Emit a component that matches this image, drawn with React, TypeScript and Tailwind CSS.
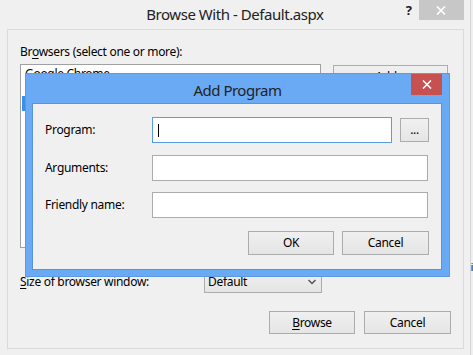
const btn =
  "flex items-center justify-center border border-[#acacac] bg-gradient-to-b from-[#f0f0f0] to-[#e5e5e5] text-[12px] leading-none text-black";

function U({ children }: { children: string }) {
  return <span className="underline underline-offset-2">{children}</span>;
}

export default function App() {
  return (
    <div className="relative flex h-[355px] w-[473px] overflow-hidden bg-[#f0f0f0] font-['Noto_Sans','DejaVu_Sans',sans-serif] tracking-[-0.3px] text-black">
      {/* Main window */}
      <div className="flex h-full w-[471px] flex-col border-r border-[#d4d4d4] bg-[#f0f0f0]">
        {/* Title bar */}
        <div className="grid h-[29px] grid-cols-[1fr_auto_1fr]">
          <div />
          <div className="pt-[4px] text-[15px] leading-[20px] tracking-[-0.45px] text-[#222]">Browse With - Default.aspx</div>
          <div className="flex items-start justify-end pr-[6px]">
            <span className="mr-[7px] mt-[2px] text-[13px] font-bold leading-[16px] text-[#222]">?</span>
            <div className="flex h-[20px] w-[45px] items-center justify-center bg-[#c7c7c7]">
              <svg width="10" height="9" viewBox="0 0 10 9">
                <path d="M1 0.5 L9 8.5 M9 0.5 L1 8.5" stroke="#fff" strokeWidth="1.6" />
              </svg>
            </div>
          </div>
        </div>
        {/* Panel */}
        <div className="ml-[7px] flex h-[320px] w-[457px] flex-col border border-[#dadada] bg-[#f0f0f0] pl-[12px] pr-[12px] pt-[14px]">
          <div className="h-[16px] text-[12px] leading-[16px]">
            Br<U>o</U>wsers (select one or more):
          </div>
          <div className="mt-[4px] flex items-start">
            <div className="flex h-[184px] w-[301px] flex-col border border-[#a0a0a0] bg-white p-[1px] text-[12px]">
              <div className="h-[15px] pl-[3px] leading-[15px]">Google Chrome</div>
              <div className="h-[15px]" />
              <div className="h-[15px] bg-[#3d8ee6]" />
            </div>
            <div className={`${btn} ml-[12px] mt-[1px] h-[23px] w-[115px]`}>Add...</div>
          </div>
          <div className="mt-[22px] flex items-center">
            <div className="w-[184px] text-[12px] leading-[16px]">
              <U>S</U>ize of browser window:
            </div>
            <div className="flex h-[23px] w-[118px] items-center justify-between border border-[#acacac] bg-gradient-to-b from-[#f0f0f0] to-[#e5e5e5] pl-[3px] pr-[5px] text-[12px]">
              <span>Default</span>
              <svg width="8" height="6" viewBox="0 0 8 6">
                <path d="M0.5 1 L4 4.5 L7.5 1" stroke="#555" strokeWidth="1.5" fill="none" />
              </svg>
            </div>
          </div>
          <div className="mt-[18px] flex justify-end">
            <div className={`${btn} h-[23px] w-[86px]`}>
              <U>B</U>rowse
            </div>
            <div className={`${btn} ml-[9px] h-[23px] w-[87px]`}>Cancel</div>
          </div>
        </div>
      </div>
      <div className="flex-1 pt-[262px] text-[10px] leading-[10px]">i</div>

      {/* Add Program dialog */}
      <div className="absolute left-[25px] top-[73px] flex h-[204px] w-[425px] flex-col border border-[#5b9ae6] bg-[#6aaaf4]">
        <div className="relative flex h-[29px] items-center justify-center">
          <span className="pt-[2px] text-[15px] leading-[20px] tracking-[-0.5px] text-[#222]">Add Program</span>
          <div className="absolute right-[7px] top-0 flex h-[21px] w-[31px] items-center justify-center bg-[#c75050]">
            <svg width="10" height="9" viewBox="0 0 10 9">
              <path d="M1 0.5 L9 8.5 M9 0.5 L1 8.5" stroke="#fff" strokeWidth="1.6" />
            </svg>
          </div>
        </div>
        <div className="ml-[6px] flex h-[167px] w-[410px] flex-col border border-[#5a94d8] bg-[#f0f0f0] pt-[13px] text-[12px]">
          <div className="flex h-[26px] items-center">
            <div className="w-[119px] pl-[12px]">Program:</div>
            <div className="flex h-[26px] w-[240px] items-center border border-[#569de5] bg-white pl-[5px]">
              <div className="h-[13px] w-[1px] bg-black" />
            </div>
            <div className={`${btn} ml-[8px] h-[24px] w-[29px]`}>...</div>
          </div>
          <div className="mt-[12px] flex h-[26px] items-center">
            <div className="w-[119px] pl-[12px]">Arguments:</div>
            <div className="h-[26px] w-[276px] border border-[#acacac] bg-white" />
          </div>
          <div className="mt-[11px] flex h-[26px] items-center">
            <div className="w-[119px] pl-[12px]">Friendly name:</div>
            <div className="h-[26px] w-[276px] border border-[#acacac] bg-white" />
          </div>
          <div className="mt-[13px] flex justify-end pr-[12px]">
            <div className={`${btn} h-[24px] w-[86px] border-[#4a9ae6]`}>OK</div>
            <div className={`${btn} ml-[8px] h-[24px] w-[87px]`}>Cancel</div>
          </div>
        </div>
      </div>
    </div>
  );
}
